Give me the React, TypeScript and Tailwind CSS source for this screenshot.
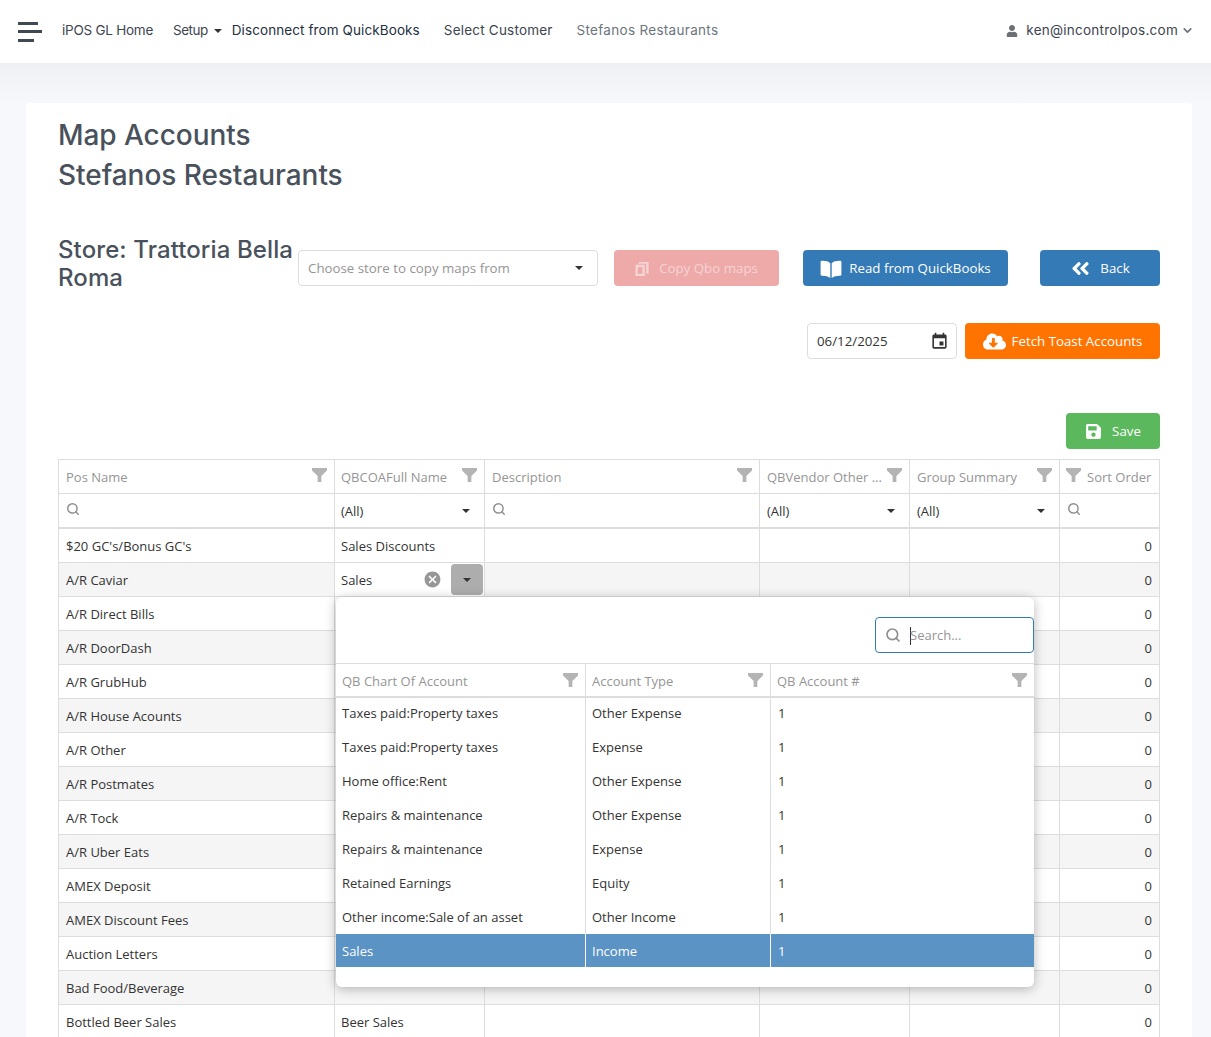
import { FaAngleDoubleLeft, FaCloudDownloadAlt, FaSave, FaUser } from "react-icons/fa";
import { MdCancel, MdEvent } from "react-icons/md";
import { LuChevronDown, LuSearch } from "react-icons/lu";

const rows = [
    ["$20 GC's/Bonus GC's", "Sales Discounts"],
    ["A/R Caviar", ""],
    ["A/R Direct Bills", ""],
    ["A/R DoorDash", ""],
    ["A/R GrubHub", ""],
    ["A/R House Acounts", ""],
    ["A/R Other", ""],
    ["A/R Postmates", ""],
    ["A/R Tock", ""],
    ["A/R Uber Eats", ""],
    ["AMEX Deposit", ""],
    ["AMEX Discount Fees", ""],
    ["Auction Letters", ""],
    ["Bad Food/Beverage", ""],
    ["Bottled Beer Sales", "Beer Sales"],
];

const accounts = [
    ["Taxes paid:Property taxes", "Other Expense"],
    ["Taxes paid:Property taxes", "Expense"],
    ["Home office:Rent", "Other Expense"],
    ["Repairs & maintenance", "Other Expense"],
    ["Repairs & maintenance", "Expense"],
    ["Retained Earnings", "Equity"],
    ["Other income:Sale of an asset", "Other Income"],
];

const cols = "grid grid-cols-[276px_150px_275px_150px_150px_100px]";
const popupCols = "grid grid-cols-[250px_185px_263px]";
const cell = "border-r border-[#dddddd] px-[7px] pt-[2px] flex items-center min-w-0";
const popupCell = "border-r border-[#dddddd] px-[6px] pt-[2px] flex items-center min-w-0";

function Funnel({ className = "" }: { className?: string }) {
    return (
        <svg viewBox="0 0 16 14" preserveAspectRatio="none" className={`h-[14px] w-[15px] shrink-0 fill-[#b4b4b4] ${className}`}>
            <path d="M0 0h16v2.5L10 8v6H6V8L0 2.5z" />
        </svg>
    );
}

function Caret({ className = "" }: { className?: string }) {
    return <span className={`block h-0 w-0 border-x-[4px] border-t-[4px] border-x-transparent border-t-[#333333] ${className}`} />;
}

function HeaderCell({ label, className = "h-[33px] pt-[2px] pl-[7px]", funnelClass = "-mt-[6px]", border = true }: { label: string; className?: string; funnelClass?: string; border?: boolean }) {
    return (
        <div className={`flex items-center justify-between pr-[7px] text-[#959595] ${border ? "border-r border-[#dddddd]" : ""} ${className}`}>
            <span className="whitespace-nowrap">{label}</span>
            <Funnel className={funnelClass} />
        </div>
    );
}

function NavBar() {
    return (
        <div className="relative z-10 flex h-[63px] items-center bg-white pb-[2px] pl-[18px] pr-[17px] font-['Inter',sans-serif] text-[13.5px] text-[#3d4550]">
            <div className="mr-[20px] mt-[2px] flex w-[24px] flex-col gap-[5.5px]">
                <span className="block h-[3px] w-[20px] bg-[#3f4853]" />
                <span className="block h-[3px] w-[24px] bg-[#3f4853]" />
                <span className="block h-[3px] w-[16px] bg-[#3f4853]" />
            </div>
            <span className="tracking-[-0.25px]">iPOS GL Home</span>
            <span className="ml-[20px] tracking-[-0.5px]">Setup</span>
            <Caret className="ml-[6px] mr-[10px] border-t-[#3d4550]" />
            <span className="tracking-[0.1px] text-[#24303f]">Disconnect from QuickBooks</span>
            <span className="ml-[24px] tracking-[0.2px]">Select Customer</span>
            <span className="ml-[24px] tracking-[0.3px] text-[#6c757d]">Stefanos Restaurants</span>
            <div className="ml-auto flex items-center text-[#3d4550]">
                <FaUser className="mr-[8px] text-[12px] text-[#6c6f75]" />
                <span className="tracking-[0.25px]">ken@incontrolpos.com</span>
                <LuChevronDown className="ml-[3px] text-[13px] text-[#6c6f75]" strokeWidth={3} />
            </div>
        </div>
    );
}

function Toolbar() {
    return (
        <div className="text-[13.3px]">
            <div className="mt-[40px] flex items-start">
                <h2 className="mt-[1px] w-[240px] font-['Inter',sans-serif] text-[24px] font-medium leading-[28px] tracking-[0.1px] text-[#49525c]">
                    Store: Trattoria Bella Roma
                </h2>
                <div className="mt-[15px] flex h-[36px] w-[300px] items-center justify-between rounded border border-[#dddddd] pl-[9px] pr-[14px] pt-[1px] text-[#959595]">
                    Choose store to copy maps from
                    <Caret className="-mt-[1px]" />
                </div>
                <button className="ml-[16px] mt-[15px] flex h-[36px] w-[165px] items-center justify-center gap-[10px] rounded bg-[#eea9a9] pt-[1px] text-[#f6d4d4]">
                    <svg viewBox="0 0 14 15" className="h-[14px] w-[14px] fill-[#f6d4d4]">
                        <path d="M0 3h10v12H0zM2.5 5.5v7h5v-7zM3.5 0H14v12.5h-2.5V2H3.5z" fillRule="evenodd" />
                    </svg>
                    Copy Qbo maps
                </button>
                <button className="ml-[24px] mt-[15px] flex h-[36px] w-[205px] items-center justify-center gap-[7px] rounded bg-[#337ab7] pt-[1px] text-white">
                    <svg viewBox="0 0 22 18" className="h-[18px] w-[22px] fill-white">
                        <path d="M10.3 3.2C8.4 1.4 5 .6 1.6.8L.6 1.6V15l1 .7c3.2-.2 6.400.6 8.700 2.200zM11.700 3.200C13.600 1.400 17 .6 20.400.8l1 .8V15l-1 .7c-3.200-.2-6.400.6-8.700 2.200z" />
                    </svg>
                    Read from QuickBooks
                </button>
                <button className="ml-[32px] mt-[15px] flex h-[36px] w-[120px] items-center justify-center gap-[9px] rounded bg-[#337ab7] pt-[1px] text-white">
                    <FaAngleDoubleLeft className="text-[21px]" />
                    Back
                </button>
            </div>
            <div className="mt-[31px] flex justify-end gap-[8px]">
                <div className="flex h-[36px] w-[150px] items-center justify-between rounded border border-[#dddddd] pl-[9px] pr-[7px] pt-[1px] text-[#333333]">
                    06/12/2025
                    <MdEvent className="-mt-[1px] text-[19px] text-[#333333]" />
                </div>
                <button className="flex h-[36px] w-[195px] items-center justify-center gap-[6px] rounded bg-[#ff7300] pt-[1px] text-white">
                    <FaCloudDownloadAlt className="text-[23px]" />
                    Fetch Toast Accounts
                </button>
            </div>
            <div className="mt-[54px] flex justify-end">
                <button className="flex h-[36px] w-[94px] items-center justify-center gap-[10px] rounded bg-[#5cb85c] pt-[1px] text-white">
                    <FaSave className="text-[17px]" />
                    Save
                </button>
            </div>
        </div>
    );
}

function AccountsPopup() {
    const head = "h-[32px] pt-[4px] pl-[6px]";
    return (
        <div className="absolute left-[277px] top-[137px] z-20 h-[390px] w-[698px] rounded-md bg-white shadow-[0_2px_12px_rgba(0,0,0,0.28)]">
            <div className="flex h-[66px] items-start justify-end pt-[20px]">
                <div className="flex h-[36px] w-[159px] items-center rounded border border-[#337ab7] pl-[9px] pt-[1px] text-[#959595]">
                    <LuSearch className="-mt-[1px] mr-[9px] text-[16px] text-[#8f8f8f]" strokeWidth={2.5} />
                    <span className="h-[18px] w-px bg-[#333333]" />
                    <span className="-ml-px">Search...</span>
                </div>
            </div>
            <div className={`${popupCols} -mb-[2px] h-[35px] border-y border-b-2 border-[#dddddd]`}>
                <HeaderCell label="QB Chart Of Account" className={head} funnelClass="-mt-[4px]" />
                <HeaderCell label="Account Type" className={head} funnelClass="-mt-[4px]" />
                <HeaderCell label="QB Account #" className={head} funnelClass="-mt-[4px]" border={false} />
            </div>
            {accounts.map(([name, type], i) => (
                <div key={i} className={`${popupCols} h-[34px] text-[#333333]`}>
                    <div className={popupCell}>{name}</div>
                    <div className={popupCell}>{type}</div>
                    <div className="flex items-center px-[7px] pt-[2px]">1</div>
                </div>
            ))}
            <div className={`${popupCols} h-[33px] bg-[#5c93c5] text-white`}>
                <div className="flex items-center border-r border-white px-[6px] pt-[2px]">Sales</div>
                <div className="flex items-center border-r border-white px-[6px] pt-[2px]">Income</div>
                <div className="flex items-center px-[7px] pt-[2px]">1</div>
            </div>
        </div>
    );
}

function MapGrid() {
    const searchIcon = <LuSearch className="-mt-[5px] text-[14px] text-[#8f8f8f]" strokeWidth={2.5} />;
    return (
        <div className="relative mt-[10px] border-l border-t border-[#dddddd]">
            <div className={`${cols} border-b border-[#dddddd]`}>
                <HeaderCell label="Pos Name" />
                <HeaderCell label="QBCOAFull Name" className="h-[33px] pt-[2px] pl-[6px]" />
                <HeaderCell label="Description" />
                <HeaderCell label="QBVendor Other ..." />
                <HeaderCell label="Group Summary" />
                <div className="flex h-[33px] items-center gap-[6px] border-r border-[#dddddd] pl-[6px] pt-[2px] text-[#959595]">
                    <Funnel className="-mt-[6px]" />
                    <span className="whitespace-nowrap">Sort Order</span>
                </div>
            </div>
            <div className={`${cols} h-[35px] border-b-2 border-[#dddddd] text-[#333333]`}>
                <div className={cell}>{searchIcon}</div>
                <div className={`${cell} justify-between pl-[6px]`}>(All)<Caret className="-mt-[2px] mr-[7px]" /></div>
                <div className={cell}>{searchIcon}</div>
                <div className={`${cell} justify-between`}>(All)<Caret className="-mt-[2px] mr-[7px]" /></div>
                <div className={`${cell} justify-between`}>(All)<Caret className="-mt-[2px] mr-[7px]" /></div>
                <div className={cell}>{searchIcon}</div>
            </div>
            {rows.map(([name, account], i) => (
                <div key={name} className={`${cols} h-[34px] border-b border-[#dddddd] text-[#333333] ${i % 2 ? "bg-[#f5f5f5]" : "bg-white"}`}>
                    <div className={cell}>{name}</div>
                    {i === 1 ? (
                        <div className="flex items-center justify-between border-r border-[#dddddd] bg-white pl-[6px] pr-[1px]">
                            <span className="pt-[2px]">Sales</span>
                            <div className="flex items-center gap-[9px]">
                                <MdCancel className="text-[19px] text-[#979797]" />
                                <div className="flex h-[31px] w-[32px] items-center justify-center rounded-sm bg-[#adadad]"><Caret /></div>
                            </div>
                        </div>
                    ) : (
                        <div className={`${cell} pl-[6px]`}>{account}</div>
                    )}
                    <div className={cell} />
                    <div className={cell} />
                    <div className={cell} />
                    <div className={`${cell} justify-end`}>0</div>
                </div>
            ))}
            <AccountsPopup />
        </div>
    );
}

export default function App() {
    return (
        <div className="h-[1037px] w-full overflow-hidden bg-[#f6f8fc] font-['Open_Sans',sans-serif] text-[13px]">
            <NavBar />
            <div className="h-[40px] bg-gradient-to-b from-[#eef0f4] to-[#f6f8fc]" />
            <div className="mx-[26px] w-[1166px] rounded bg-white px-[32px] pt-[12px]">
                <h1 className="font-['Inter',sans-serif] text-[28px] font-medium leading-[40px] tracking-[-0.05px] text-[#49525c]">
                    Map Accounts
                    <br />
                    Stefanos Restaurants
                </h1>
                <Toolbar />
                <MapGrid />
            </div>
        </div>
    );
}
